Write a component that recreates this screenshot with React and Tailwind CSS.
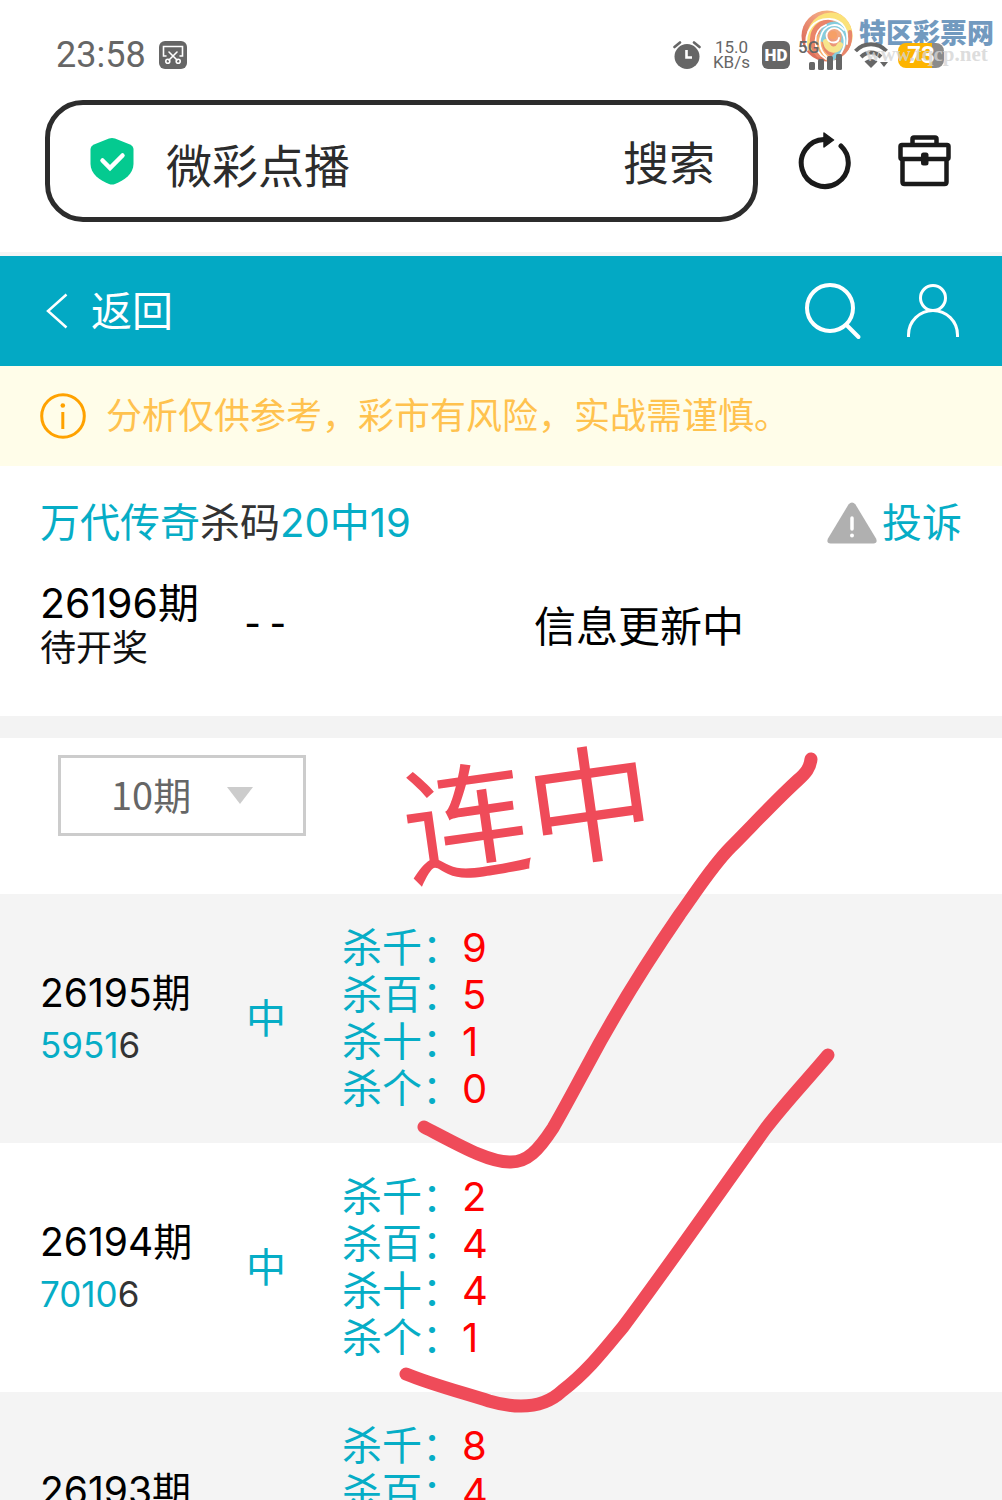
import React, { useState } from "react";

const labels = ["杀千", "杀百", "杀十", "杀个"];

const history = [
  { period: "26195期", hit: "5951", miss: "6", result: "中", picks: [9, 5, 1, 0] },
  { period: "26194期", hit: "7010", miss: "6", result: "中", picks: [2, 4, 4, 1] },
  { period: "26193期", hit: "", miss: "", result: "", picks: [8, 4] },
];

const StatusBar = () => (
  <div className="relative z-10 flex items-center justify-between h-[100px] pt-[10px] pl-14 pr-[58px] text-[#666] font-[Roboto,sans-serif]">
    <div className="flex items-center gap-3">
      <span className="text-[36px] leading-10">23:58</span>
      <svg width="30" height="30" viewBox="0 0 30 30" fill="none">
        <rect x="1" y="1" width="28" height="28" rx="6" fill="#666" />
        <g stroke="#fff" strokeWidth="1.6" strokeLinecap="round">
          <path d="M8 16H5.500V6.500H24.500V16H22" />
          <path d="M11 12L19 20M19 12L11 20" />
          <circle cx="9.800" cy="21.300" r="2" />
          <circle cx="20.200" cy="21.300" r="2" />
        </g>
      </svg>
    </div>
    <div className="flex items-center gap-3">
      <svg width="28" height="30" viewBox="0 0 28 30" fill="none">
        <circle cx="14" cy="16.500" r="12.500" fill="#666" />
        <path d="M1.500 7L7 2.500M26.500 7L21 2.500" stroke="#666" strokeWidth="2.600" strokeLinecap="round" />
        <path d="M13.500 10V17.500H19" stroke="#fff" strokeWidth="2.600" />
      </svg>
      <div className="text-[17px] leading-[15px] text-center">
        <div>15.0</div>
        <div>KB/s</div>
      </div>
      <div className="flex items-center justify-center w-7 h-7 rounded-md bg-[#666] text-white text-[17px] leading-5 font-black">
        HD
      </div>
      <div className="flex flex-col w-10 h-[30px]">
        <span className="-ml-1 text-[17px] leading-[14px] font-medium">5G</span>
        <svg className="self-end" width="34" height="16" viewBox="0 0 34 16">
          <g fill="#666">
            <rect x="1" y="8" width="6" height="8" rx="1.500" />
            <rect x="10" y="5" width="6" height="11" rx="1.500" />
            <rect x="19" y="2" width="6" height="14" rx="1.500" />
            <rect x="28" y="0" width="6" height="16" rx="1.500" />
          </g>
        </svg>
      </div>
      <svg width="36" height="28" viewBox="0 0 36 28" fill="none">
        <g stroke="#666" strokeWidth="4">
          <path d="M1.500 10C10 1 24 1 32.500 10" />
          <path d="M7 16C13 10 21 10 27 16" />
        </g>
        <path d="M17 27L10.500 20.500C14.500 17 19.500 17 23.500 20.500Z" fill="#666" />
        <path d="M26 21H34L30 26Z" fill="#666" />
      </svg>
      <div className="flex items-center justify-center w-[46px] h-[25px] -ml-1 rounded-lg bg-[linear-gradient(90deg,#fdb400_74%,#8a8a8a_74%)] text-white text-[24px] leading-6 font-bold">
        73
      </div>
    </div>
  </div>
);

const Watermark = () => (
  <div className="absolute top-2 right-2 flex items-start gap-1 pointer-events-none">
    <svg width="54" height="54" viewBox="0 0 54 54" fill="none">
      <defs>
        <linearGradient id="ball" x1="0.9" y1="0" x2="0.1" y2="0.7">
          <stop offset="0" stopColor="#f9c46f" />
          <stop offset="0.5" stopColor="#f0a080" />
          <stop offset="1" stopColor="#dd6f5c" />
        </linearGradient>
        <clipPath id="ballClip">
          <circle cx="26" cy="28" r="25.500" />
        </clipPath>
      </defs>
      <circle cx="26" cy="28" r="25.500" fill="url(#ball)" />
      <g clipPath="url(#ballClip)" strokeLinecap="round">
        <path d="M10 40C6 24 14 9 30 8C42 8 49 17 49 30" stroke="#fbe27a" strokeWidth="7" />
        <path d="M18 46C8 36 11 16 29 14" stroke="#ea8468" strokeWidth="7" />
        <path d="M30 52C21 47 16 39 19 29" stroke="#f8b070" strokeWidth="6" />
        <path d="M22 31C19 19 34 12 41 20C47 28 42 43 31 52" stroke="#86cddd" strokeWidth="6" />
        <path d="M25 34C27 43 36 44 39 37" stroke="#f6e58c" strokeWidth="6" />
        <path d="M49 24C50 36 45 46 36 52" stroke="#e8876c" strokeWidth="4" />
        <g stroke="#fff" strokeWidth="1.800">
          <path d="M6 42C2 22 14 10 29 11C42 12 48 22 46 36" />
          <path d="M25 51C11 43 11 22 25 17" />
          <path d="M33 53C22 49 16 38 20 28C23 17 36 13 43 22" />
          <path d="M38 48C46 38 45 26 37 21C30 18 24 24 26 30C28 36 37 36 38 30" />
        </g>
        <circle cx="32" cy="27" r="4" fill="#f6a066" />
      </g>
    </svg>
    <div className="flex flex-col items-center pt-2">
      <span className="font-['Noto_Sans_CJK_SC',sans-serif] text-[27px] leading-8 font-black text-[#729abf]">
        特区彩票网
      </span>
      <span className="relative z-20 -mt-1 font-['Liberation_Serif',serif] text-[21px] leading-5 font-bold text-[#d4d4d4]/80">
        www.tqcp.net
      </span>
    </div>
  </div>
);

const SearchBar = () => (
  <div className="flex items-center pl-[45px] pr-[50px] pb-[30px] border-b-4 border-[#f5f5f5]">
    <form
      onSubmit={(e) => e.preventDefault()}
      className="flex flex-1 min-w-0 items-center h-[122px] pl-10 pr-[38px] border-[5px] border-[#2c2c2c] rounded-[38px] text-[46px] text-[#2c2c2c]"
    >
      <svg className="shrink-0" width="44" height="48" viewBox="0 0 44 48" fill="none">
        <path
          d="M19 1.500Q22 0.300 25 1.500L40 7.500Q43.500 9 43.500 12.500V27C43.500 37 34 43.500 25 47Q22 48 19 47C10 43.500 0.500 37 0.500 27V12.500Q0.500 9 4 7.500Z"
          fill="#04ca90"
        />
        <path d="M12.500 23.500L20 31L32.500 18.500" stroke="#fff" strokeWidth="4.500" strokeLinecap="round" />
      </svg>
      <input
        type="text"
        aria-label="搜索"
        defaultValue="微彩点播"
        className="flex-1 min-w-0 ml-8 h-[72px] pt-1 bg-transparent outline-none"
      />
      <button type="submit" className="pt-1">搜索</button>
    </form>
    <button type="button" aria-label="刷新" className="ml-10">
      <svg width="54" height="58" viewBox="0 0 54 58" fill="none">
        <path d="M43 14A23.500 23.500 0 1 1 26 7.500" stroke="#1a1a1a" strokeWidth="5" strokeLinecap="round" />
        <path d="M26 1V15L35.500 8Z" fill="#1a1a1a" stroke="#1a1a1a" strokeWidth="1.500" strokeLinejoin="round" />
      </svg>
    </button>
    <button type="button" aria-label="工具箱" className="ml-[46px]">
      <svg width="54" height="54" viewBox="0 0 54 54" fill="none">
        <g stroke="#1a1a1a" strokeWidth="4.500" strokeLinejoin="round">
          <path d="M14.500 10V5Q14.500 3.500 16 3.500H37Q38.500 3.500 38.500 5V10" />
          <rect x="2.500" y="11" width="48" height="14" rx="1.500" />
          <path d="M4.500 25V48Q4.500 50 6.500 50H46.500Q48.500 50 48.500 48V25" />
        </g>
        <rect x="23" y="18.500" width="7.500" height="13" rx="2.500" fill="#1a1a1a" />
      </svg>
    </button>
  </div>
);

const NavBar = () => (
  <header className="flex items-center h-[110px] pl-[45px] pr-[42px] bg-[#03a9c4] text-white">
    <a href="#back" className="flex items-center gap-[22px] mr-auto text-[41px] leading-[60px]">
      <svg width="24" height="36" viewBox="0 0 24 36" fill="none">
        <path d="M21.500 1.500L3 18L21.500 34.500" stroke="#fff" strokeWidth="2.500" />
      </svg>
      返回
    </a>
    <button type="button" aria-label="搜索">
      <svg width="58" height="58" viewBox="0 0 58 58" fill="none" stroke="#fff" strokeLinecap="round">
        <circle cx="26" cy="26" r="23" strokeWidth="4" />
        <path d="M42.500 43L54.500 55" strokeWidth="4" />
      </svg>
    </button>
    <button type="button" aria-label="我的" className="ml-11">
      <svg width="54" height="54" viewBox="0 0 54 54" fill="none" stroke="#fff" strokeWidth="3">
        <circle cx="27" cy="14" r="12.500" />
        <path d="M2.500 53V51A24.500 24.500 0 0 1 51.500 51V53" />
      </svg>
    </button>
  </header>
);

const Notice = () => (
  <div className="flex items-center h-[100px] gap-5 px-10 bg-[#fffde9] text-[36px] text-[#ffc24f]">
    <svg className="shrink-0" width="46" height="46" viewBox="0 0 46 46" fill="none">
      <circle cx="23" cy="23" r="21.300" stroke="#ffa200" strokeWidth="3" />
      <circle cx="22.800" cy="12.500" r="2.300" fill="#ffa200" />
      <path d="M22.800 19V36" stroke="#ffa200" strokeWidth="3" />
    </svg>
    <p>分析仅供参考，彩市有风险，实战需谨慎。</p>
  </div>
);

const CurrentPeriod = () => (
  <section className="px-10 pt-[33px] pb-[45px] text-black">
    <div className="flex items-center justify-between text-[40px] leading-[48px] text-[#06adc6]">
      <h1>
        万代传奇<span className="text-[#333]">杀码</span>20中19
      </h1>
      <a href="#complain" className="flex items-center gap-1">
        <svg width="52" height="42" viewBox="0 0 52 42" fill="none">
          <path d="M22.500 2.500Q26 -1.500 29.500 2.500L50 36.500Q52 41 47.500 41.500H4.500Q0 41 2 36.500Z" fill="#b0b0b0" />
          <path d="M26 16V27" stroke="#fff" strokeWidth="3.500" strokeLinecap="round" />
          <circle cx="26" cy="33.500" r="2" fill="#fff" />
        </svg>
        投诉
      </a>
    </div>
    <div className="grid grid-cols-[200px_294px_1fr] items-center mt-[34px] leading-[45px]">
      <div>
        <div className="text-[41px]">26196期</div>
        <div className="text-[36px] text-[#111]">待开奖</div>
      </div>
      <div className="text-[42px] font-['Liberation_Mono',monospace]">--</div>
      <div className="text-[42px]">信息更新中</div>
    </div>
  </section>
);

const PeriodSelect = () => {
  const [count, setCount] = useState("10");

  return (
    <div className="px-[58px] pt-[17px] pb-[58px]">
      <div className="relative w-[248px]">
        <select
          aria-label="期数"
          value={count}
          onChange={(e) => setCount(e.target.value)}
          className="block w-full h-[81px] pl-[50px] pb-1 appearance-none border-[3px] border-[#ccc] bg-white text-[38px] text-[#666] font-['Noto_Sans_CJK_SC',sans-serif]"
        >
          <option value="10">10期</option>
        </select>
        <svg className="absolute right-[53px] top-8 pointer-events-none" width="26" height="17" viewBox="0 0 26 17">
          <path d="M0 0H26L13 17Z" fill="#ccc" />
        </svg>
      </div>
    </div>
  );
};

const HistoryTable = () => (
  <table className="w-full border-collapse">
    <tbody>
      {history.map((row) => (
        <tr key={row.period} className="h-[249px] odd:bg-[#f4f4f4]">
          <td className="w-[246px] pl-10 align-middle">
            <div className="h-[53px] text-[39px] leading-[53px] text-black">{row.period}</div>
            <div className="h-[53px] text-[35px] leading-[53px] text-[#333]">
              <span className="text-[#06adc6]">{row.hit}</span>
              {row.miss}
            </div>
          </td>
          <td className="w-24 align-middle text-[40px] leading-[53px] text-[#06adc6]">{row.result}</td>
          <td className="pt-[30px] align-top text-[40px] leading-[47px] text-[#06adc6]">
            {row.picks.map((n, i) => (
              <div key={labels[i]}>
                {labels[i]}：<span className="text-[#f00]">{n}</span>
              </div>
            ))}
          </td>
        </tr>
      ))}
    </tbody>
  </table>
);

// Hand-drawn marks laid over the results
const Marks = () => (
  <div className="absolute left-[390px] top-0 pointer-events-none">
    <div className="absolute left-3 top-[2px] -rotate-8 whitespace-nowrap text-[126px] leading-[150px] text-[#ef4b59]">
      连中
    </div>
    <svg width="460" height="690" viewBox="0 -2 460 690" fill="none">
      <g stroke="#ef4b59" strokeWidth="13" strokeLinecap="round" strokeLinejoin="round">
        <path d="M421 19C420 28 416 33 408 40C385 61 362 86 341 107C322 126 306 152 290 174C257 222 225 273 196 328C184 350 174 369 163 388C148 411 137 422 121 422C99 423 67 404 34 387" />
        <path d="M438 315C418 339 396 362 376 388C329 453 283 520 233 587C214 610 197 632 172 651C155 667 130 670 99 661C74 653 40 644 16 634" />
      </g>
    </svg>
  </div>
);

const App = () => {
  return (
    <div className="relative h-screen overflow-hidden bg-white font-[Inter,'Noto_Sans_CJK_SC',sans-serif]">
      <StatusBar />
      <Watermark />
      <SearchBar />
      <NavBar />
      <Notice />
      <CurrentPeriod />
      <section className="relative border-t-[22px] border-[#f3f3f3]">
        <PeriodSelect />
        <HistoryTable />
        <Marks />
      </section>
    </div>
  );
};

export default App;
